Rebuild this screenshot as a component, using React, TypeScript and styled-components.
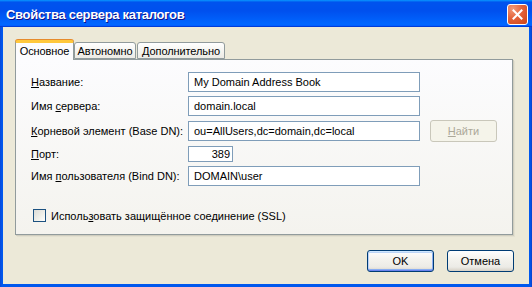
import React from 'react';
import styled, { createGlobalStyle } from 'styled-components';

const GlobalStyle = createGlobalStyle`
  html, body {
    margin: 0;
    padding: 0;
    width: 532px;
    height: 287px;
    overflow: hidden;
    background: #ece9d8;
  }
  body {
    font-family: "Liberation Sans", Arial, sans-serif;
    font-size: 11px;
    color: #000;
  }
`;

const Window = styled.div`
  width: 532px;
  height: 287px;
  box-sizing: border-box;
  display: flex;
  flex-direction: column;
  background: linear-gradient(90deg, #0a48d8 0, #0058ee 2px, #0058ee calc(100% - 2px), #0a3fc9 100%);
  padding: 0 3px 3px;
`;

const TitleBar = styled.div`
  height: 27px;
  margin: 0 -3px;
  padding: 0 4px 0 6px;
  display: flex;
  align-items: center;
  justify-content: space-between;
  background: linear-gradient(
    180deg,
    #0997ff,
    #0053ee 8%,
    #0050ee 40%,
    #0066ff 88%,
    #0066ff 93%,
    #005bff 95%,
    #003dd7 96%,
    #003dd7
  );
`;

const TitleText = styled.span`
  font-family: "Liberation Sans", Arial, sans-serif;
  font-weight: bold;
  font-size: 13px;
  color: #fff;
  text-shadow: 1px 1px 0 #0f1089;
  letter-spacing: -0.3px;
  margin-top: 1px;
`;

const CloseButton = styled.div`
  width: 21px;
  height: 21px;
  box-sizing: border-box;
  border: 1px solid #fff;
  border-radius: 3px;
  background: radial-gradient(circle at 25% 20%, #f29a78 0, #e4633b 45%, #cc4317 100%);
  display: flex;
  align-items: center;
  justify-content: center;
  margin-top: 1px;
`;

const Client = styled.div`
  flex: 1;
  background: #ece9d8;
  display: flex;
  flex-direction: column;
  padding: 13px 15px 12px 12px;
`;

const TabStrip = styled.div`
  height: 19px;
  display: flex;
  align-items: flex-end;
`;

const Tab = styled.div<{ $active?: boolean; $w: number; $ml?: number }>`
  position: relative;
  z-index: ${(p) => (p.$active ? 2 : 1)};
  box-sizing: border-box;
  width: ${(p) => p.$w}px;
  height: ${(p) => (p.$active ? 20 : 17)}px;
  margin-left: ${(p) => p.$ml ?? 0}px;
  margin-bottom: ${(p) => (p.$active ? -1 : 0)}px;
  border: 1px solid #919b9c;
  border-bottom: ${(p) => (p.$active ? 'none' : '1px solid #919b9c')};
  border-top: ${(p) => (p.$active ? '3px solid #ffc83c' : '1px solid #919b9c')};
  box-shadow: ${(p) => (p.$active ? '0 -1px 0 #e68b2c' : 'none')};
  border-radius: 3px 3px 0 0;
  background: ${(p) =>
    p.$active ? '#fcfcfe' : 'linear-gradient(180deg, #ffffff 0, #f4f3ee 60%, #ecebe5 100%)'};
  display: flex;
  align-items: center;
  justify-content: center;
  padding-bottom: ${(p) => (p.$active ? 1 : 0)}px;
  white-space: nowrap;
  letter-spacing: -0.1px;
`;

const Panel = styled.div`
  width: 498px;
  height: 176px;
  box-sizing: border-box;
  border: 1px solid #919b9c;
  background: linear-gradient(180deg, #fcfcfe 0, #f4f3ee 100%);
  box-shadow: 1px 1px 0 #d0cebf, 2px 2px 0 #e3e0d0;
  padding: 12px 0 0 15px;
  display: flex;
  flex-direction: column;
`;

const FormGrid = styled.div`
  display: grid;
  grid-template-columns: 157px 232px auto;
  grid-template-rows: 20px 20px 22px 16px 20px;
  row-gap: 4px;
  align-items: center;
`;

const Label = styled.label`
  white-space: nowrap;
`;

const Field = styled.div<{ $w?: number; $h?: number; $right?: boolean }>`
  box-sizing: border-box;
  width: ${(p) => p.$w ?? 232}px;
  height: ${(p) => p.$h ?? 20}px;
  border: 1px solid #7f9db9;
  background: #fff;
  display: flex;
  align-items: center;
  justify-content: ${(p) => (p.$right ? 'flex-end' : 'flex-start')};
  padding: ${(p) => (p.$right ? '0 2px 0 0' : '0 0 0 5px')};
  white-space: nowrap;
  overflow: hidden;
`;

const Button = styled.div<{ $default?: boolean; $disabled?: boolean; $w?: number }>`
  box-sizing: border-box;
  width: ${(p) => p.$w ?? 67}px;
  height: 22px;
  border-radius: 3px;
  border: 1px solid ${(p) => (p.$disabled ? '#c9c7ba' : '#003c74')};
  background: ${(p) =>
    p.$disabled
      ? '#f5f4ea'
      : 'linear-gradient(180deg, #ffffff 0, #f4f3ee 40%, #ecebe6 80%, #d6d0c5 100%)'};
  box-shadow: ${(p) =>
    p.$default
      ? 'inset 0 1px 0 #cee7ff, inset 0 -1px 0 #6982ee, inset 1px 0 0 #b9d1fa, inset -1px 0 0 #8aaef0, inset 0 2px 0 #bcd4f6, inset 0 -2px 0 #89adf2'
      : 'none'};
  color: ${(p) => (p.$disabled ? '#aca899' : '#000')};
  display: flex;
  align-items: center;
  justify-content: center;
`;

const FindButton = styled(Button)`
  margin-left: 10px;
`;

const CheckRow = styled.div`
  display: flex;
  align-items: center;
  margin-top: 23px;
  margin-left: 2px;
  gap: 5px;
`;

const CheckBox = styled.div`
  width: 13px;
  height: 13px;
  box-sizing: border-box;
  border: 1px solid #1c5180;
  background: linear-gradient(135deg, #dcdcd7 0, #f0f0ea 60%, #ffffff 100%);
`;

const Footer = styled.div`
  margin-top: 15px;
  display: flex;
  justify-content: flex-end;
  gap: 13px;
`;

export default function App() {
  return (
    <>
      <GlobalStyle />
      <Window>
        <TitleBar>
          <TitleText>Свойства сервера каталогов</TitleText>
          <CloseButton>
            <svg width="11" height="11" viewBox="0 0 11 11">
              <path d="M1.5 1.5 L9.5 9.5 M9.5 1.5 L1.5 9.5" stroke="#fff" strokeWidth="2" strokeLinecap="square" />
            </svg>
          </CloseButton>
        </TitleBar>
        <Client>
          <TabStrip>
            <Tab $active $w={59}>Основное</Tab>
            <Tab $w={62} $ml={0}>Автономно</Tab>
            <Tab $w={88} $ml={1}>Дополнительно</Tab>
          </TabStrip>
          <Panel>
            <FormGrid>
              <Label>
                <u>Н</u>азвание:
              </Label>
              <Field>My Domain Address Book</Field>
              <span />

              <Label>
                Имя <u>с</u>ервера:
              </Label>
              <Field>domain.local</Field>
              <span />

              <Label>
                <u>К</u>орневой элемент (Base DN):
              </Label>
              <Field>ou=AllUsers,dc=domain,dc=local</Field>
              <FindButton $disabled>
                <span>
                  <u>Н</u>айти
                </span>
              </FindButton>

              <Label>
                <u>П</u>орт:
              </Label>
              <Field $w={45} $h={16} $right>
                389
              </Field>
              <span />

              <Label>
                Имя <u>п</u>ользователя (Bind DN):
              </Label>
              <Field>DOMAIN\user</Field>
              <span />
            </FormGrid>
            <CheckRow>
              <CheckBox />
              <span>
                Исполь<u>з</u>овать защищённое соединение (SSL)
              </span>
            </CheckRow>
          </Panel>
          <Footer>
            <Button $default>OK</Button>
            <Button>Отмена</Button>
          </Footer>
        </Client>
      </Window>
    </>
  );
}
